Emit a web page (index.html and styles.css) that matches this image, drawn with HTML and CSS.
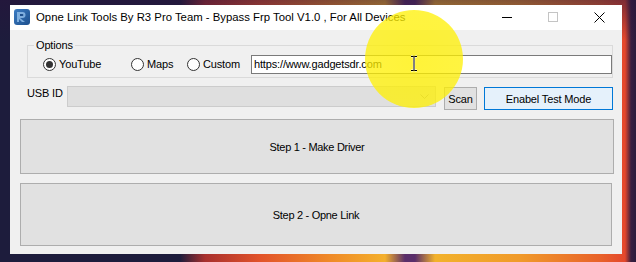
FILE: index.html
```html
<!DOCTYPE html>
<html>
<head>
<meta charset="utf-8">
<link rel="stylesheet" href="styles.css">
</head>
<body>
<div class="desktop">
  <div class="window">
    <div class="titlebar">
      <svg class="appicon" width="16" height="16" viewBox="0 0 16 16">
        <defs>
          <linearGradient id="ig" x1="0" y1="0" x2="1" y2="1">
            <stop offset="0" stop-color="#3b7cc4"/>
            <stop offset="1" stop-color="#1d4f8c"/>
          </linearGradient>
        </defs>
        <rect x="0" y="0" width="16" height="16" rx="3" fill="url(#ig)"/>
        <path d="M3 3h5.5a3 3 0 0 1 0 6H6l5 4H8L5 10v3H3z" fill="#8dbbe8" opacity="0.85"/>
        <path d="M6 5h2.4a1 1 0 0 1 0 2H6z" fill="#1d4f8c"/>
      </svg>
      <span class="title">Opne Link Tools By R3 Pro Team - Bypass Frp Tool V1.0 , For All Devices</span>
      <div class="caption">
        <span class="cap"><svg width="10" height="10" viewBox="0 0 10 10"><path d="M0 5.5h10" stroke="#000" stroke-width="1"/></svg></span>
        <span class="cap"><svg width="10" height="10" viewBox="0 0 10 10"><rect x="0.5" y="0.5" width="9" height="9" fill="none" stroke="#c4c4c4" stroke-width="1"/></svg></span>
        <span class="cap"><svg width="11" height="11" viewBox="0 0 11 11"><path d="M0.5 0.5l10 10M10.5 0.5l-10 10" stroke="#000" stroke-width="1"/></svg></span>
      </div>
    </div>
    <div class="client">
      <div class="group">
        <span class="legend">Options</span>
        <div class="opt-row">
          <span class="radio r-yt"><span class="dot checked"></span>YouTube</span>
          <span class="radio r-maps"><span class="dot"></span>Maps</span>
          <span class="radio r-custom"><span class="dot"></span>Custom</span>
          <div class="textbox">https://www.gadgetsdr.com</div>
        </div>
      </div>
      <div class="usb-row">
        <span class="usb-label">USB ID</span>
        <div class="combo">
          <svg class="chev" width="9" height="5" viewBox="0 0 9 5"><path d="M0.5 0.5l4 4 4-4" fill="none" stroke="#a9a9a9" stroke-width="1"/></svg>
        </div>
        <button class="btn scan">Scan</button>
        <button class="btn test">Enabel Test Mode</button>
      </div>
      <button class="step step1">Step 1 - Make Driver</button>
      <button class="step step2">Step 2 - Opne Link</button>
    </div>
  </div>
  <div class="highlight"></div>
  <svg class="ibeam" width="8" height="17" viewBox="0 0 8 17">
    <path d="M1 1.5h2.2M4.8 1.5H7M4 2v13M1 15.5h2.2M4.8 15.5H7" fill="none" stroke="#fff" stroke-width="2.2"/>
    <path d="M1 1.5h2.5l0.5 0.5 0.5-0.5H7M4 2v13M1 15.5h2.5l0.5-0.5 0.5 0.5H7" fill="none" stroke="#000" stroke-width="1"/>
  </svg>
</div>
</body>
</html>
```

FILE: styles.css
```css
* { box-sizing: border-box; }
html, body { margin: 0; padding: 0; }
body {
  width: 636px;
  height: 262px;
  overflow: hidden;
  font-family: "Liberation Sans", Arial, sans-serif;
}
.desktop {
  position: relative;
  width: 636px;
  height: 262px;
  padding: 5px 0 0 10px;
  background:
    linear-gradient(180deg, rgba(40,20,60,0.55) 0, rgba(40,20,60,0) 40px),
    linear-gradient(90deg, #1d1c3c 0, #1d1c3c 180px, #a8302e 205px, #e2532a 260px, #ef8a28 330px, #f4b02c 385px, #5a2e6a 405px, #5a2e6a 415px, #f2b22c 435px, #f09a2a 520px, #e8622a 600px, #e4472c 625px, #3a1f40 631px, #2c1b3c 636px);
}
.window {
  width: 612px;
  height: 249px;
  background: #f0f0f0;
  display: flex;
  flex-direction: column;
}
.titlebar {
  height: 25px;
  background: #ffffff;
  display: flex;
  align-items: center;
  padding-bottom: 1px;
}
.appicon { margin-left: 4px; flex: none; }
.title {
  margin-left: 6px;
  font-size: 11.35px;
  color: #000;
  white-space: nowrap;
}
.caption {
  margin-left: auto;
  display: flex;
  height: 24px;
}
.cap {
  width: 46px;
  display: flex;
  align-items: center;
  justify-content: center;
}
.cap svg { display: block; }
.client {
  flex: 1;
  padding: 0 9px 0 10px;
  display: flex;
  flex-direction: column;
  font-size: 11px;
  letter-spacing: -0.15px;
  color: #000;
}
.group {
  margin: 15px 0 0 7px;
  width: 586px;
  height: 33px;
  border: 1px solid #dadada;
}
.legend {
  display: block;
  width: max-content;
  margin: -7px 0 0 6px;
  padding: 0 2px;
  line-height: 13px;
  background: #f0f0f0;
}
.opt-row {
  display: flex;
  align-items: center;
  margin-top: 3px;
  padding-left: 15px;
}
.radio {
  display: flex;
  align-items: center;
  line-height: 13px;
}
.r-yt { width: 88px; }
.r-maps { width: 56px; }
.r-custom { width: 64px; }
.dot {
  width: 13px;
  height: 13px;
  border: 1px solid #333;
  border-radius: 50%;
  background: #fff;
  margin-right: 3px;
  display: flex;
  align-items: center;
  justify-content: center;
  flex: none;
}
.dot.checked::after {
  content: "";
  width: 7px;
  height: 7px;
  border-radius: 50%;
  background: #333;
}
.textbox {
  width: 361px;
  height: 19px;
  border: 1px solid #7a7a7a;
  background: #fff;
  padding: 0 0 0 2px;
  line-height: 17px;
  white-space: nowrap;
  overflow: hidden;
}
.usb-row {
  display: flex;
  align-items: flex-start;
  margin: 8px 0 0 7px;
  height: 24px;
}
.usb-label {
  width: 40px;
  margin-top: 1px;
  line-height: 13px;
}
.combo {
  width: 369px;
  height: 21px;
  background: #dfdfdf;
  border: 1px solid #cccccc;
  display: flex;
  align-items: center;
  justify-content: flex-end;
  padding-right: 6px;
}
.chev { display: block; }
.btn {
  font: inherit;
  letter-spacing: inherit;
  color: #000;
  height: 23px;
  margin-top: 1px;
  padding: 0;
  background: #e1e1e1;
  border: 1px solid #adadad;
  text-align: center;
}
.scan { width: 33px; margin-left: 8px; }
.test {
  width: 129px;
  margin-left: 7px;
  background: #e5f1fb;
  border-color: #0078d7;
}
.step {
  font: inherit;
  letter-spacing: -0.3px;
  color: #000;
  background: #e1e1e1;
  border: 1px solid #adadad;
  padding: 0;
  text-align: center;
}
.step1 { width: 594px; height: 55px; margin-top: 9px; }
.step2 { width: 592px; height: 63px; margin-top: 9px; }
.highlight {
  position: absolute;
  left: 365px;
  top: 10px;
  width: 98px;
  height: 98px;
  border-radius: 50%;
  background: radial-gradient(circle, rgba(255,240,0,0.78) 0, rgba(255,240,0,0.74) 80%, rgba(255,240,0,0.35) 95%, rgba(255,240,0,0) 100%);
  pointer-events: none;
}
.ibeam {
  position: absolute;
  left: 410px;
  top: 55px;
}
```
